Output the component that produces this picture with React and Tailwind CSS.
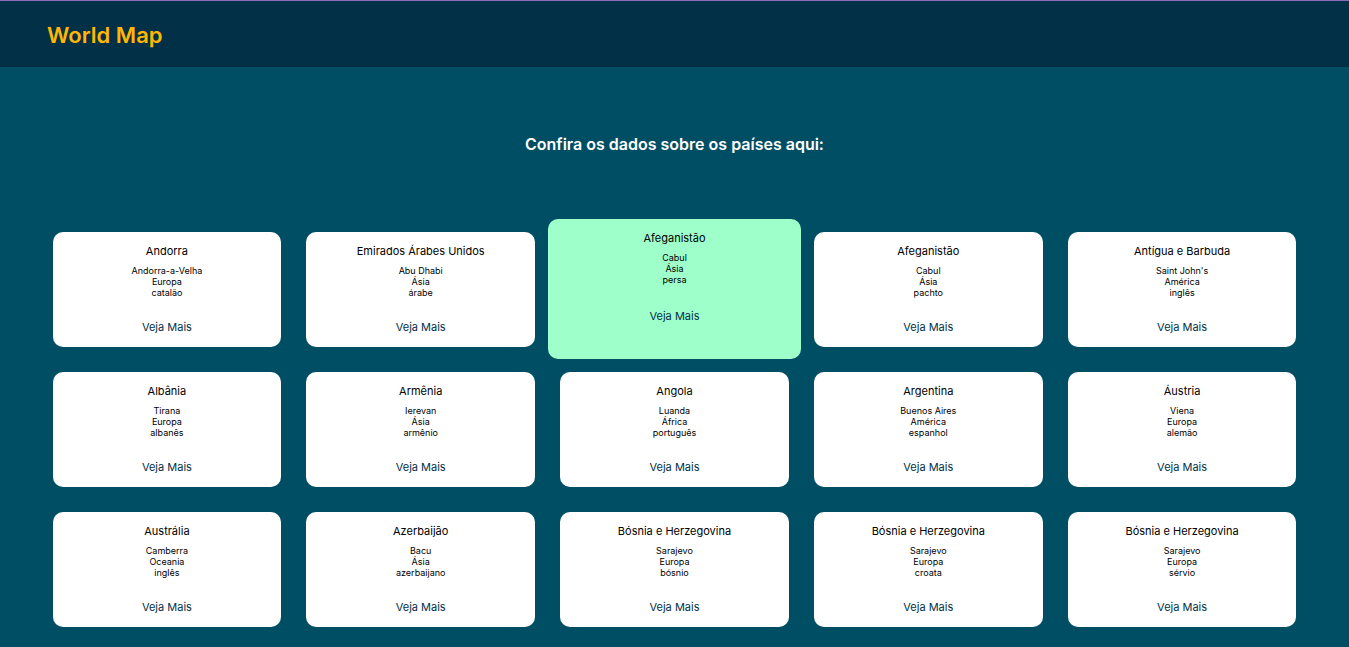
const countries = [
  ["Andorra", "Andorra-a-Velha", "Europa", "catalão"],
  ["Emirados Árabes Unidos", "Abu Dhabi", "Ásia", "árabe"],
  ["Afeganistão", "Cabul", "Ásia", "persa"],
  ["Afeganistão", "Cabul", "Ásia", "pachto"],
  ["Antígua e Barbuda", "Saint John's", "América", "inglês"],
  ["Albânia", "Tirana", "Europa", "albanês"],
  ["Armênia", "Ierevan", "Ásia", "armênio"],
  ["Angola", "Luanda", "África", "português"],
  ["Argentina", "Buenos Aires", "América", "espanhol"],
  ["Áustria", "Viena", "Europa", "alemão"],
  ["Austrália", "Camberra", "Oceania", "inglês"],
  ["Azerbaijão", "Bacu", "Ásia", "azerbaijano"],
  ["Bósnia e Herzegovina", "Sarajevo", "Europa", "bósnio"],
  ["Bósnia e Herzegovina", "Sarajevo", "Europa", "croata"],
  ["Bósnia e Herzegovina", "Sarajevo", "Europa", "sérvio"],
];

const highlighted = 2;

function CountryCard({ country, active }) {
  const [name, capital, continent, language] = country;
  return (
    <li className={active ? "flex" : "flex p-[5%]"}>
      <article
        className={
          "flex w-full flex-col items-center rounded-[10px] pt-3 pb-[13px] text-center text-black " +
          (active ? "bg-[#9fffcb]" : "bg-white")
        }
      >
        <h2 className="text-[11px] leading-[14px] font-normal">{name}</h2>
        <div className="mt-[7px] text-[9px] leading-[11px]">
          <p>{capital}</p>
          <p>{continent}</p>
          <p>{language}</p>
        </div>
        <a
          href="#"
          className={
            "text-[11px] leading-[14px] font-normal text-[#023047] " +
            (active ? "mt-6" : "mt-[22px]")
          }
        >
          Veja Mais
        </a>
      </article>
    </li>
  );
}

export default function App() {
  return (
    <div className="min-h-screen bg-[#004e64] pb-2 font-['Inter',sans-serif]">
      <header className="border-t border-[#8d6bb5] bg-[#023047] px-[47px] pt-[18px] pb-4">
        <h1 className="text-[22px] leading-8 font-semibold text-[#ffb703]">World Map</h1>
      </header>
      <main className="px-10 pt-[65px]">
        <p className="text-center text-[16px] leading-6 font-semibold text-white">
          Confira os dados sobre os países aqui:
        </p>
        <ul className="mt-[63px] grid grid-cols-5">
          {countries.map((country, index) => (
            <CountryCard key={index} country={country} active={index === highlighted} />
          ))}
        </ul>
      </main>
    </div>
  );
}
